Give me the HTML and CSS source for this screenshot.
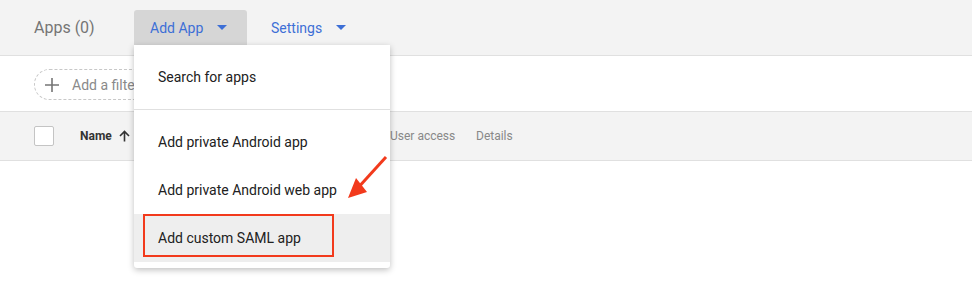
FILE: index.html
```html
<!DOCTYPE html>
<html lang="en">

<head>
  <meta charset="UTF-8">
  <title>Apps</title>
  <link rel="stylesheet" href="styles.css">
</head>

<body>
  <div class="page">
    <div class="topbar">
      <div class="title">Apps (0)</div>
      <div class="tab tab-active">Add App <span class="caret"></span></div>
      <div class="tab">Settings <span class="caret"></span></div>
    </div>

    <div class="filterbar">
      <div class="filter-pill">
        <svg class="plus" width="16" height="16" viewBox="0 0 16 16">
          <path d="M8 1v14M1 8h14" stroke="#757575" stroke-width="1.6" fill="none" />
        </svg>
        <span>Add a filter</span>
      </div>
    </div>

    <div class="table-head">
      <div class="checkbox"></div>
      <div class="col-name">Name
        <svg class="sort" width="11" height="12" viewBox="0 0 11 12">
          <path d="M5.5 11.5V1.5M1 6l4.5-4.5L10 6" stroke="#333" stroke-width="1.6" fill="none" />
        </svg>
      </div>
      <div class="col col-access">User access</div>
      <div class="col">Details</div>
    </div>

    <div class="menu">
      <div class="menu-section">
        <div class="menu-item">Search for apps</div>
      </div>
      <div class="menu-section">
        <div class="menu-item">Add private Android app</div>
        <div class="menu-item">Add private Android web app</div>
        <div class="menu-item menu-item-hover">Add custom SAML app</div>
      </div>
    </div>

    <!-- annotation -->
    <div class="callout-box"></div>
    <svg class="callout-arrow" width="972" height="307" viewBox="0 0 972 307">
      <line x1="386" y1="157" x2="356" y2="190" stroke="#f23a1c" stroke-width="3" />
      <polygon points="348,198 356,178 367,192" fill="#f23a1c" />
    </svg>
  </div>
</body>

</html>
```

FILE: styles.css
```css
body {
  margin: 0;
  background: white;
  font-family: Roboto, "Liberation Sans", Arial, sans-serif;
  color: #212121;
}

.page {
  position: relative;
  width: 972px;
  height: 307px;
  overflow: hidden;
}

.topbar {
  display: flex;
  align-items: center;
  height: 55px;
  padding-left: 34px;
  background: #f3f3f3;
  border-bottom: 1px solid #e0e0e0;
}

.title {
  font-size: 16px;
  color: #757575;
  width: 100px;
}

.tab {
  display: flex;
  align-items: center;
  height: 36px;
  padding: 0 16px;
  font-size: 14px;
  color: #3d6fd6;
  box-sizing: border-box;
}

.tab-active {
  width: 113px;
  background: #d6d6d6;
  border-radius: 3px 3px 0 0;
  margin-right: 8px;
}

.caret {
  display: inline-block;
  width: 0;
  height: 0;
  margin-left: 14px;
  border-left: 5px solid transparent;
  border-right: 5px solid transparent;
  border-top: 5px solid #3d6fd6;
}

.filterbar {
  display: flex;
  align-items: center;
  height: 55px;
  padding-left: 34px;
  border-bottom: 1px solid #e0e0e0;
}

.filter-pill {
  display: flex;
  align-items: center;
  gap: 12px;
  height: 31px;
  padding: 0 16px 0 9px;
  border: 1px dashed #c8c8c8;
  border-radius: 16px;
  box-sizing: border-box;
  font-size: 14px;
  color: #8a8a8a;
  margin-top: 2px;
}

.table-head {
  display: flex;
  align-items: center;
  height: 48px;
  padding-left: 34px;
  background: #f3f3f3;
  border-bottom: 1px solid #e0e0e0;
  font-size: 12px;
}

.checkbox {
  width: 18px;
  height: 18px;
  border: 1.5px solid #c4c4c4;
  border-radius: 2px;
  background: white;
  margin-right: 26px;
}

.col-name {
  display: flex;
  align-items: center;
  gap: 7px;
  width: 310px;
  font-weight: bold;
  color: #333;
}

.col {
  color: #888;
}

.col-access {
  width: 86px;
}

.menu {
  position: absolute;
  left: 134px;
  top: 45px;
  width: 256px;
  background: white;
  border-radius: 0 0 3px 3px;
  box-shadow: 0 2px 6px rgba(0, 0, 0, 0.25);
}

.menu-section {
  padding: 8px 0;
}

.menu-section + .menu-section {
  border-top: 1px solid #e0e0e0;
  padding-bottom: 6px;
}

.menu-item {
  display: flex;
  align-items: center;
  height: 48px;
  padding-left: 24px;
  font-size: 14px;
  color: #212121;
}

.menu-item-hover {
  background: #eeeeee;
}

.callout-box {
  position: absolute;
  left: 143px;
  top: 214px;
  width: 191px;
  height: 43px;
  border: 2px solid #f23a1c;
  box-sizing: border-box;
}

.callout-arrow {
  position: absolute;
  left: 0;
  top: 0;
  pointer-events: none;
}
```
